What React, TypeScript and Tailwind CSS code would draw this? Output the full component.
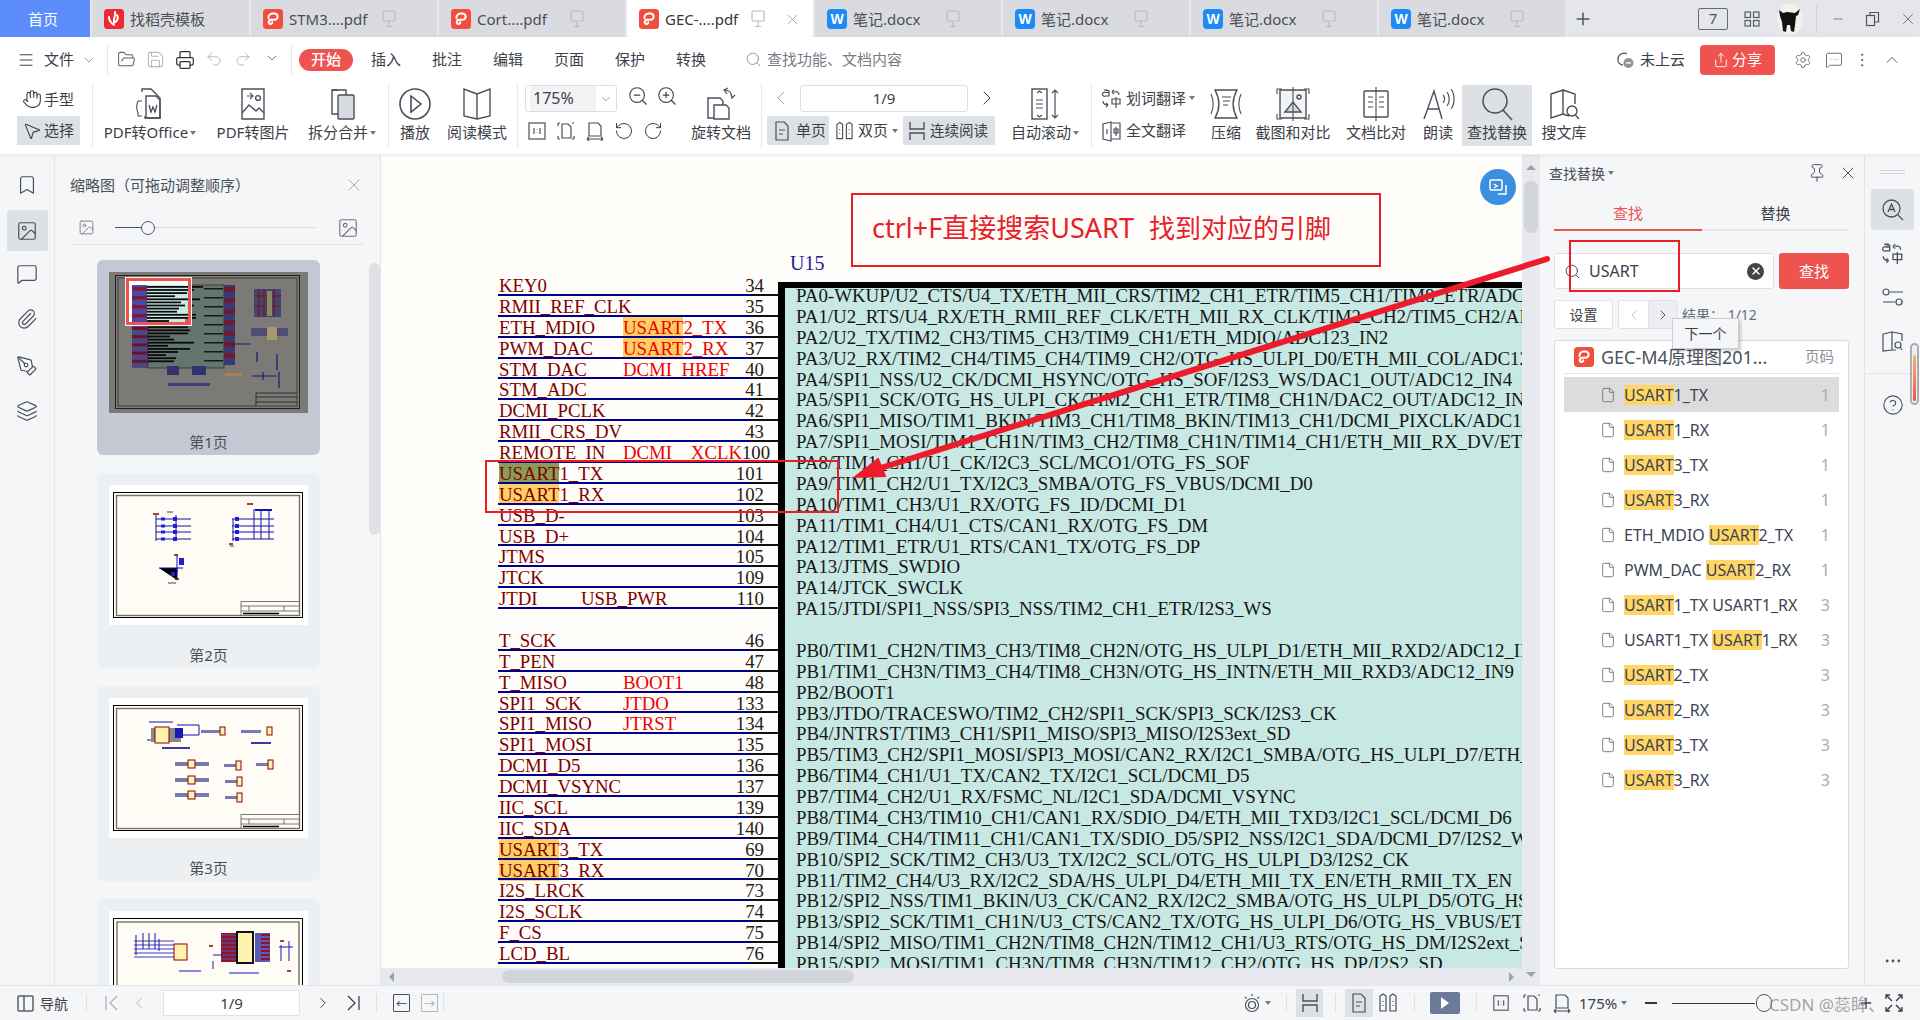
import { Fragment, type ReactNode } from 'react';
import {
  Bookmark, ChevronDown, ChevronLeft, ChevronRight, ChevronUp, CircleHelp, Ellipsis, File, FolderOpen,
  Hand, Image, Layers, Menu, MessageSquare, MessageSquareMore, Minus, MoreVertical, MousePointer2,
  Paperclip, PenTool, Pin, Plus, Printer, Redo2, RotateCcw, RotateCw, Save, Search, Settings, Share, Undo2, X,
  ZoomIn, ZoomOut,
} from 'lucide-react';

const paPins = [
  'PA0-WKUP/U2_CTS/U4_TX/ETH_MII_CRS/TIM2_CH1_ETR/TIM5_CH1/TIM8_ETR/ADC123_IN0',
  'PA1/U2_RTS/U4_RX/ETH_RMII_REF_CLK/ETH_MII_RX_CLK/TIM2_CH2/TIM5_CH2/ADC123_IN1',
  'PA2/U2_TX/TIM2_CH3/TIM5_CH3/TIM9_CH1/ETH_MDIO/ADC123_IN2',
  'PA3/U2_RX/TIM2_CH4/TIM5_CH4/TIM9_CH2/OTG_HS_ULPI_D0/ETH_MII_COL/ADC123_IN3',
  'PA4/SPI1_NSS/U2_CK/DCMI_HSYNC/OTG_HS_SOF/I2S3_WS/DAC1_OUT/ADC12_IN4',
  'PA5/SPI1_SCK/OTG_HS_ULPI_CK/TIM2_CH1_ETR/TIM8_CH1N/DAC2_OUT/ADC12_IN5',
  'PA6/SPI1_MISO/TIM1_BKIN/TIM3_CH1/TIM8_BKIN/TIM13_CH1/DCMI_PIXCLK/ADC12_IN6',
  'PA7/SPI1_MOSI/TIM1_CH1N/TIM3_CH2/TIM8_CH1N/TIM14_CH1/ETH_MII_RX_DV/ETH_RMII_CRS_DV',
  'PA8/TIM1_CH1/U1_CK/I2C3_SCL/MCO1/OTG_FS_SOF',
  'PA9/TIM1_CH2/U1_TX/I2C3_SMBA/OTG_FS_VBUS/DCMI_D0',
  'PA10/TIM1_CH3/U1_RX/OTG_FS_ID/DCMI_D1',
  'PA11/TIM1_CH4/U1_CTS/CAN1_RX/OTG_FS_DM',
  'PA12/TIM1_ETR/U1_RTS/CAN1_TX/OTG_FS_DP',
  'PA13/JTMS_SWDIO',
  'PA14/JTCK_SWCLK',
  'PA15/JTDI/SPI1_NSS/SPI3_NSS/TIM2_CH1_ETR/I2S3_WS',
  '',
  'PB0/TIM1_CH2N/TIM3_CH3/TIM8_CH2N/OTG_HS_ULPI_D1/ETH_MII_RXD2/ADC12_IN8',
  'PB1/TIM1_CH3N/TIM3_CH4/TIM8_CH3N/OTG_HS_INTN/ETH_MII_RXD3/ADC12_IN9',
  'PB2/BOOT1',
  'PB3/JTDO/TRACESWO/TIM2_CH2/SPI1_SCK/SPI3_SCK/I2S3_CK',
  'PB4/JNTRST/TIM3_CH1/SPI1_MISO/SPI3_MISO/I2S3ext_SD',
  'PB5/TIM3_CH2/SPI1_MOSI/SPI3_MOSI/CAN2_RX/I2C1_SMBA/OTG_HS_ULPI_D7/ETH_PPS_OUT',
  'PB6/TIM4_CH1/U1_TX/CAN2_TX/I2C1_SCL/DCMI_D5',
  'PB7/TIM4_CH2/U1_RX/FSMC_NL/I2C1_SDA/DCMI_VSYNC',
  'PB8/TIM4_CH3/TIM10_CH1/CAN1_RX/SDIO_D4/ETH_MII_TXD3/I2C1_SCL/DCMI_D6',
  'PB9/TIM4_CH4/TIM11_CH1/CAN1_TX/SDIO_D5/SPI2_NSS/I2C1_SDA/DCMI_D7/I2S2_WS',
  'PB10/SPI2_SCK/TIM2_CH3/U3_TX/I2C2_SCL/OTG_HS_ULPI_D3/I2S2_CK',
  'PB11/TIM2_CH4/U3_RX/I2C2_SDA/HS_ULPI_D4/ETH_MII_TX_EN/ETH_RMII_TX_EN',
  'PB12/SPI2_NSS/TIM1_BKIN/U3_CK/CAN2_RX/I2C2_SMBA/OTG_HS_ULPI_D5/OTG_HS_ID',
  'PB13/SPI2_SCK/TIM1_CH1N/U3_CTS/CAN2_TX/OTG_HS_ULPI_D6/OTG_HS_VBUS/ETH',
  'PB14/SPI2_MISO/TIM1_CH2N/TIM8_CH2N/TIM12_CH1/U3_RTS/OTG_HS_DM/I2S2ext_SD',
  'PB15/SPI2_MOSI/TIM1_CH3N/TIM8_CH3N/TIM12_CH2/OTG_HS_DP/I2S2_SD',
];

const netRows: [string, string, string][] = [
  ['KEY0', '', '34'], ['RMII_REF_CLK', '', '35'], ['ETH_MDIO', 'USART2_TX', '36'], ['PWM_DAC', 'USART2_RX', '37'],
  ['STM_DAC', 'DCMI_HREF', '40'], ['STM_ADC', '', '41'], ['DCMI_PCLK', '', '42'], ['RMII_CRS_DV', '', '43'],
  ['REMOTE_IN', 'DCMI__XCLK', '100'], ['USART1_TX', '', '101'], ['USART1_RX', '', '102'], ['USB_D-', '', '103'],
  ['USB_D+', '', '104'], ['JTMS', '', '105'], ['JTCK', '', '109'], ['JTDI', 'USB_PWR', '110'], ['', '', ''],
  ['T_SCK', '', '46'], ['T_PEN', '', '47'], ['T_MISO', 'BOOT1', '48'], ['SPI1_SCK', 'JTDO', '133'],
  ['SPI1_MISO', 'JTRST', '134'], ['SPI1_MOSI', '', '135'], ['DCMI_D5', '', '136'], ['DCMI_VSYNC', '', '137'],
  ['IIC_SCL', '', '139'], ['IIC_SDA', '', '140'], ['USART3_TX', '', '69'], ['USART3_RX', '', '70'],
  ['I2S_LRCK', '', '73'], ['I2S_SCLK', '', '74'], ['F_CS', '', '75'], ['LCD_BL', '', '76'],
];

const results: [string, string, string, string][] = [
  ['', 'USART', '1_TX', '1'], ['', 'USART', '1_RX', '1'], ['', 'USART', '3_TX', '1'], ['', 'USART', '3_RX', '1'],
  ['ETH_MDIO ', 'USART', '2_TX', '1'], ['PWM_DAC ', 'USART', '2_RX', '1'],
  ['', 'USART', '1_TX USART1_RX', '3'], ['USART1_TX ', 'USART', '1_RX', '3'],
  ['', 'USART', '2_TX', '3'], ['', 'USART', '2_RX', '3'], ['', 'USART', '3_TX', '3'], ['', 'USART', '3_RX', '3'],
];

const sw = { strokeWidth: 1.3 };

function PdfIcon({ size = 20 }: { size?: number }) {
  return (
    <svg width={size} height={size} viewBox="0 0 20 20" className="shrink-0">
      <rect width="20" height="20" rx="3.5" fill="#ef4f3f" />
      <path d="M5.500 9a4 4 0 0 1 4-4.500h2a3 3 0 0 1 0 6.300H8.200a2.400 2.400 0 0 0-2.400 2.400 1.700 1.700 0 0 0 3.400 0" fill="none" stroke="#fff" strokeWidth="2" strokeLinecap="round" />
    </svg>
  );
}

function WordIcon() {
  return (
    <span className="w-[20px] h-[20px] rounded-[4px] bg-[#1d8af5] text-white text-[14px] leading-[20px] text-center font-bold shrink-0 font-['Liberation_Sans',sans-serif]">W</span>
  );
}

function LeafIcon() {
  return (
    <svg width="20" height="20" viewBox="0 0 20 20" className="shrink-0">
      <rect width="20" height="20" rx="3.5" fill="#ea2a2f" />
      <path d="M11 3c1 4-2 6-1 11 3-2 5-5 3-8M5 8c0 4 2 6 5 8" fill="none" stroke="#fff" strokeWidth="2" strokeLinecap="round" />
    </svg>
  );
}

function MonitorIcon() {
  return (
    <svg width="16" height="20" viewBox="0 0 16 20" fill="none" stroke="#b9bdc5" strokeWidth="1.2" className="shrink-0">
      <rect x="2" y="2" width="12" height="10" rx="1" />
      <path d="M8 12v5M5 17.5h6" />
    </svg>
  );
}

function Tab({ icon, label, active, width = 'w-[186px]' }: { icon: ReactNode; label: string; active?: boolean; width?: string }) {
  return (
    <div className={`${width} h-full flex items-center pl-[12px] pt-px gap-[6px] text-[15px] ${active ? 'bg-white text-[#33373f]' : 'bg-[#d9dbe0] text-[#4a4e57]'}`}>
      {icon}
      <span className="whitespace-nowrap">{label}</span>
      {label !== '找稻壳模板' && (
        <span className="ml-auto mr-[40px] flex items-center">
          <MonitorIcon />
        </span>
      )}
      {active && <X size={17} strokeWidth={1} className="text-[#8d929c] -ml-[28px] mr-[12px]" />}
    </div>
  );
}

function VLine({ className = '' }: { className?: string }) {
  return <div className={`w-px self-stretch bg-[#e8e9ec] shrink-0 my-[3px] ${className}`} />;
}

function Big({ icon, label, width, caret, active }: { icon: ReactNode; label: string; width: string; caret?: boolean; active?: boolean }) {
  return (
    <div className={`${width} h-[61px] mt-[5px] flex flex-col items-center shrink-0 ${active ? 'bg-[#dde0e5]' : ''}`}>
      <div className="h-[37px] pt-px flex items-center justify-center">{icon}</div>
      <div className="leading-[21px] whitespace-nowrap flex items-center">
        {label}
        {caret && <span className="ml-[2px] w-0 h-0 border-x-[3px] border-x-transparent border-t-[4px] border-t-[#777]" />}
      </div>
    </div>
  );
}

const big = { width: 36, height: 36, viewBox: '0 0 36 36', fill: 'none', stroke: '#4a4f5a', strokeWidth: 1.4 };

function PdfOfficeIcon() {
  return (
    <svg {...big}>
      <path d="M10 6V3h9l9 9v20H13v-2" />
      <path d="M14 10h10l4 4v18H14z" />
      <path d="M17 19l2 7 2-5 2 5 2-7" strokeWidth="1.3" />
      <path d="M6 15c-2 5-2 8 0 12M10 30H6v-4M6 15h4" strokeWidth="1.1" />
    </svg>
  );
}
function PdfImageIcon() {
  return (
    <svg {...big}>
      <path d="M7 3h22v30H7z" />
      <circle cx="23" cy="12" r="2.4" />
      <path d="M7 27l7-8 7 6 3-3 5 5" />
      <path d="M12 10h6M15 7l3 3-3 3" strokeWidth="1.1" />
    </svg>
  );
}
function SplitIcon() {
  return (
    <svg {...big}>
      <path d="M14 4h-6v24h6" />
      <path d="M8 4h14v5" />
      <rect x="14" y="9" width="16" height="24" rx="1" fill="#d7dae0" />
    </svg>
  );
}
function PlayBig() {
  return (
    <svg {...big} strokeWidth={1.6}>
      <circle cx="18" cy="18" r="15" />
      <path d="M14 10l10 8-10 8z" />
    </svg>
  );
}
function BookBig() {
  return (
    <svg {...big}>
      <path d="M18 8L5 3v27l13 3 13-3V3z" />
      <path d="M18 8v25" />
    </svg>
  );
}
function RotateDoc() {
  return (
    <svg {...big}>
      <path d="M5 12h12l3 3v17H5z" fill="#fff" />
      <path d="M11 19h12l3 3v11H11z" fill="#fff" />
      <path d="M21 4c5 0 8 3 8 8M28 8l1 4 3-3M24 8l-3-4 4-2" strokeWidth="1.2" />
    </svg>
  );
}
function ScrollIcon() {
  return (
    <svg {...big}>
      <rect x="5" y="3" width="15" height="30" />
      <path d="M9 14h7M9 18h7M9 22h7M10 7l2.5-2 2.5 2M10 29l2.5 2 2.5-2" strokeWidth="1.2" />
      <path d="M28 4v28M25 7l3-3 3 3M25 29l3 3 3-3" strokeWidth="1.2" />
    </svg>
  );
}
function CompressIcon() {
  return (
    <svg {...big}>
      <path d="M7 4h22c-5 9-5 19 0 28H7c5-9 5-19 0-28z" />
      <path d="M14 11h9M15 15h7M15 19h5" strokeWidth="1.1" />
      <path d="M3 8c3 7 3 13 0 20M33 8c-3 7-3 13 0 20" strokeWidth="1.1" />
    </svg>
  );
}
function CaptureIcon() {
  return (
    <svg {...big}>
      <path d="M5 4h26v28H5z" fill="#f2f3f5" />
      <path d="M10 26l8-10 8 10z" fill="#d7dae0" />
      <circle cx="24" cy="11" r="2" />
      <path d="M18 1v34M2 8V3h5M29 3h5v5M2 28v5h5M29 33h5v-5" strokeWidth="1.1" />
    </svg>
  );
}
function CompareIcon() {
  return (
    <svg {...big}>
      <rect x="6" y="5" width="24" height="26" rx="1" />
      <path d="M18 1v34M10 11h5M10 16h5M10 21h5M21 11h5M21 16h5M21 21h5" strokeWidth="1.1" />
    </svg>
  );
}
function ReadIcon() {
  return (
    <svg {...big}>
      <path d="M4 33L14 5l8 28M8 23h11" />
      <path d="M23 9c2 2 2 5 0 8M27 6c3 4 3 10 0 14M31 3c4 5 4 15 0 20" strokeWidth="1.2" />
    </svg>
  );
}
function FindIcon() {
  return (
    <svg {...big} strokeWidth={1.5}>
      <circle cx="16" cy="15" r="12" />
      <path d="M24 24l9 10" />
    </svg>
  );
}
function LibraryIcon() {
  return (
    <svg {...big}>
      <path d="M5 8l12-4v24L5 32zM17 4l12 4v10M17 28l6 2" />
      <circle cx="26" cy="25" r="5" />
      <path d="M29.5 29l3.5 4" />
    </svg>
  );
}
function TranslateIcon({ size = 22 }: { size?: number }) {
  return (
    <svg width={size} height={size} viewBox="0 0 22 22" fill="none" stroke="#4a4f5a" strokeWidth="1.2">
      <path d="M8 3.5H4.5a2 2 0 0 0 0 0M3 3h3a2 2 0 0 1 2 2v4H4.5a2 2 0 1 1 0-3.5H8" />
      <path d="M13 5c3-1 5 0 5 3M11 5l2-2M11 5l2 2" />
      <path d="M11 12h8v5h-8zM15 10v11" />
      <path d="M2 14c0 3 2 4 5 4M7 18l-2-2M7 18l-2 2" />
    </svg>
  );
}
function ThumbGlyph({ size }: { size: number }) {
  return <Image size={size} strokeWidth={1.2} className="text-[#6d717a]" />;
}

function Small({ kind, size = 20 }: { kind: 'actual' | 'page' | 'width'; size?: number }) {
  return (
    <svg width={size} height={size} viewBox="0 0 20 20" fill="none" stroke="#4a4f5a" strokeWidth="1.2">
      {kind === 'actual' && (
        <Fragment>
          <rect x="2" y="2" width="16" height="16" />
          <path d="M7 7v6M13 7v6M10 8v.5M10 11.5v.5" />
        </Fragment>
      )}
      {kind === 'page' && (
        <Fragment>
          <path d="M6 3h6l3 3v11H6z" />
          <path d="M2 2h2M2 2v3M18 2h-2M2 18h2M2 18v-3M18 18h-2M18 18v-3" />
        </Fragment>
      )}
      {kind === 'width' && (
        <Fragment>
          <path d="M4 2h9l3 3v10H4z" />
          <path d="M2 18h16M2 18l2-2M2 18l2 2M18 18l-2-2M18 18l-2 2" />
        </Fragment>
      )}
    </svg>
  );
}

function SinglePage({ size = 20 }: { size?: number }) {
  return (
    <svg width={size} height={size} viewBox="0 0 20 20" fill="none" stroke="#4a4f5a" strokeWidth="1.2">
      <path d="M4 1h8l4 4v14H4z" />
      <path d="M7 9h6M7 13h4" />
    </svg>
  );
}
function DoublePage({ size = 20 }: { size?: number }) {
  return (
    <svg width={size} height={size} viewBox="0 0 20 20" fill="none" stroke="#4a4f5a" strokeWidth="1.2">
      <path d="M2 3l3-2 3 2v15H2zM12 3l3-2 3 2v15h-6z" />
      <path d="M5 8v1M5 12v1M15 8v1M15 12v1" />
    </svg>
  );
}
function Continuous({ size = 20 }: { size?: number }) {
  return (
    <svg width={size} height={size} viewBox="0 0 20 20" fill="none" stroke="#4a4f5a" strokeWidth="1.4">
      <path d="M3 1v7h14V1M3 19v-7h14v7M1 10h0" />
    </svg>
  );
}

/* grubby little schematic previews in the thumbnail strip */
const ends = [55, 50, 48, 40, 56, 38, 46, 44, 30, 48, 52, 34, 30, 44, 50, 40, 26, 34, 46, 24, 50, 30, 22, 36, 26];

function Frame({ dark }: { dark?: boolean }) {
  const c = dark ? '#1d1d1d' : '#000';
  return (
    <Fragment>
      <rect x="4.5" y="7.5" width="189" height="125" fill="none" stroke={c} strokeWidth="1" />
      <rect x="7.5" y="10.5" width="183" height="120" fill="none" stroke={dark ? '#444' : '#77736c'} strokeWidth="1.4" />
      <path d="M132 130v-13.5h58M132 121h58M132 126h58M140 126v-5M175 126v-5" fill="none" stroke={dark ? '#333' : '#555'} strokeWidth="0.8" />
      <path d="M134 128.500h36" stroke={c} strokeWidth="1.5" />
    </Fragment>
  );
}

function FirstThumb() {
  return (
    <svg viewBox="0 0 199 141" className="w-[199px] h-[141px] block">
      <rect width="199" height="141" fill="#7c7a77" />
      <rect x="6.500" y="3.500" width="184" height="133" fill="none" stroke="#222" />
      <rect x="9" y="6" width="179" height="128" fill="none" stroke="#4b4a47" strokeWidth="1.2" />
      <path d="M147 134v-13h41M147 125h41M147 130h41" stroke="#1d1d1d" fill="none" strokeWidth="0.8" />
      <rect x="23" y="13" width="16" height="83" fill="#4a4880" />
      {[0, 1, 2, 3, 4, 5, 6, 7, 8, 9].map((i) => <rect key={i} x="23" y={14 + i * 8.200} width="16" height="3" fill="#6e1030" />)}
      <rect x="39" y="13" width="76" height="83" fill="#62756f" stroke="#3b3b3b" />
      {ends.map((e, i) => <rect key={i} x="39" y={14 + i * 3.100} width={e - (i % 3) * 4} height="1.800" fill="#0a0a0a" />)}
      {[0, 1, 2, 3, 4, 5, 6, 7, 8].map((i) => <rect key={i} x="95" y={16 + i * 9} width="19" height="1.500" fill="#181818" />)}
      <rect x="115" y="13" width="11" height="80" fill="#3a3a72" />
      {[0, 1, 2, 3, 4, 5, 6].map((i) => <rect key={i} x="115" y={15 + i * 11} width="11" height="5" fill="#6e1a30" />)}
      <rect x="145" y="17" width="27" height="28" fill="#45456e" />
      <path d="M150 17v28M155 17v28M165 17v28M145 24h27M145 34h27" stroke="#6a2035" strokeWidth="1.600" />
      <rect x="158" y="19" width="5" height="25" fill="#8c8860" />
      <rect x="142" y="56" width="37" height="8" fill="#4d4d78" />
      <rect x="158" y="55" width="10" height="13" fill="#a89a68" />
      <path d="M122 72h20M148 80v10M168 82v16M143 104h25M154 100v8M170 100v16" stroke="#1a1a70" strokeWidth="1.200" />
      <rect x="58" y="94" width="12" height="9" fill="#32326e" />
      <rect x="83" y="94" width="14" height="9" fill="#32326e" />
      <rect x="59" y="111" width="42" height="3" fill="#40407f" />
      <rect x="116" y="101" width="17" height="3" fill="#a88050" />
      <rect x="16" y="5" width="67" height="49" fill="#f4f4f4" />
      <rect x="18.500" y="7.500" width="62" height="44" fill="#fff" stroke="#ef5350" strokeWidth="3" />
      <rect x="38" y="13" width="41" height="37" fill="#c7e8e3" />
      <rect x="23" y="13" width="15" height="37" fill="#4848a8" />
      {[0, 1, 2, 3].map((i) => <rect key={i} x="23" y={15 + i * 9} width="15" height="3.500" fill="#8a1530" />)}
      {ends.slice(0, 12).map((e, i) => <rect key={i} x="38" y={14 + i * 3.100} width={Math.min(41, e - (i % 4) * 4)} height="1.800" fill="#0a0a0a" />)}
      <rect x="76" y="47" width="6" height="6" fill="#ef5350" />
    </svg>
  );
}

function SecondThumb() {
  return (
    <svg viewBox="0 0 199 140" className="w-[199px] h-[140px] block">
      <rect width="199" height="140" fill="#fff" />
      <rect x="5" y="8" width="188" height="124" fill="#fffcf6" />
      <Frame />
      <g stroke="#1010b0" strokeWidth="1">
        {[34, 41, 47, 54].map((y) => <path key={y} d="M47 0h35" transform={`translate(0 ${y})`} />)}
        {[34, 41, 47, 54].map((y) => <path key={y} d="M123 0h42" transform={`translate(0 ${y})`} />)}
        <path d="M47 30v26M67 30v26M145 24v30M152 24v30M160 24v30M124 34v22" />
        <path d="M50 83h18v12M68 70v18M68 83h6" />
      </g>
      <g fill="#2020d0">
        {[34, 41, 47, 54].map((y) => <rect key={y} x="52" y={y - 1.500} width="4" height="3" />)}
        {[34, 41, 47, 54].map((y) => <rect key={y} x="64" y={y - 2} width="4" height="4" />)}
        {[34, 41, 47, 54].map((y) => <rect key={y} x="126" y={y - 2} width="4" height="4" />)}
        <rect x="70" y="73" width="5" height="7" />
        <rect x="62" y="87" width="4" height="4" />
      </g>
      <rect x="146" y="24" width="17" height="2" fill="#1010c0" />
      <path d="M44 29h6M120 59h4M138 19h6M65 70h4M66 94h4" stroke="#8b0000" strokeWidth="1.500" />
      <path d="M58 27h6M121 61h4M59 98h8" stroke="#345" strokeWidth="1.200" />
    </svg>
  );
}

function ThirdThumb() {
  const plugs = [[66, 66], [66, 82], [66, 97]];
  const jacks = [[115, 67], [116, 83], [116, 99], [147, 66]];
  return (
    <svg viewBox="0 0 199 140" className="w-[199px] h-[140px] block">
      <rect width="199" height="140" fill="#fff" />
      <rect x="5" y="8" width="188" height="124" fill="#fffcf6" />
      <Frame />
      <path d="M40 24h24M68 27h22v10H68M38 42h30" stroke="#1010b0" strokeWidth="1" fill="none" />
      <rect x="42" y="30" width="30" height="14" fill="#888" />
      <rect x="46" y="29" width="14" height="16" fill="#fff3b0" stroke="#8b0000" />
      <rect x="66" y="30" width="8" height="10" fill="#1a1ab0" />
      <rect x="92" y="32" width="22" height="3" fill="#7a7ab4" />
      <rect x="111" y="29" width="5" height="8" fill="#fff3b0" stroke="#8b0000" />
      <rect x="132" y="32" width="20" height="3" fill="#7a7ab4" />
      <rect x="158" y="29" width="5" height="8" fill="#fff3b0" stroke="#8b0000" />
      <rect x="53" y="49" width="28" height="2" fill="#3a3aa0" />
      <rect x="142" y="44" width="20" height="2" fill="#3a3aa0" />
      {plugs.map(([x, y]) => (
        <g key={y}>
          <rect x={x} y={y - 2} width="34" height="4" fill="#777ab0" />
          <rect x={x + 13} y={y - 4} width="7" height="8" fill="#fff3b0" stroke="#8b0000" />
        </g>
      ))}
      {jacks.map(([x, y]) => (
        <g key={x + y}>
          <rect x={x} y={y - 1} width="14" height="3" fill="#777ab0" />
          <rect x={x + 12} y={y - 4} width="5" height="9" fill="#fff3b0" stroke="#8b0000" />
        </g>
      ))}
    </svg>
  );
}

function FourthThumb() {
  return (
    <svg viewBox="0 0 199 74" className="w-[199px] h-[74px] block">
      <rect width="199" height="74" fill="#fff" />
      <rect x="4.500" y="7.500" width="189" height="70" fill="#fffcf6" stroke="#000" />
      <rect x="8" y="11" width="182" height="66" fill="none" stroke="#77736c" strokeWidth="1.400" />
      {[30, 34, 38, 42, 46].map((y) => <path key={y} d="M25 0h40" transform={`translate(0 ${y})`} stroke="#3a3ac0" />)}
      <path d="M27 24v20M34 22v16M40 22v16M46 22v16M50 28v12" stroke="#1515b0" />
      <rect x="65" y="33" width="13" height="16" fill="#fff3b0" stroke="#8b0000" />
      <rect x="112" y="22" width="16" height="29" fill="#8a1530" />
      {[24, 28, 32, 36, 40, 44, 48].map((y) => <path key={y} d="M112 0h16" transform={`translate(0 ${y})`} stroke="#5a5ab0" />)}
      <rect x="128" y="21" width="16" height="31" fill="#fff3b0" stroke="#111" strokeWidth="2" />
      <rect x="146" y="22" width="15" height="29" fill="#5a5ab0" />
      {[24, 28, 32, 36, 40, 44, 48].map((y) => <path key={y} d="M152 0h9" transform={`translate(0 ${y})`} stroke="#8a1530" strokeWidth="2" />)}
      <path d="M170 36h14M172 34v16M104 44h10M104 50v8M180 30v20" stroke="#1a1ab0" />
      <path d="M100 35h4M171 30h4M178 60h4" stroke="#8b0000" strokeWidth="1.500" />
      <path d="M70 60h22M120 62h30" stroke="#1a1ab0" />
    </svg>
  );
}

function ThumbCard({ label, selected, children }: { label: string; selected?: boolean; children: ReactNode }) {
  return (
    <div className={`w-[223px] h-[195px] mx-auto rounded-[6px] px-[12px] pt-[12px] shrink-0 ${selected ? 'bg-[#c4c8d2]' : 'bg-[#edf0f3]'}`}>
      {children}
      <div className={`text-center text-[15px] leading-[20px] text-[#4a4f5a] ${selected ? 'mt-[19px]' : 'mt-[20px]'}`}>{label}</div>
    </div>
  );
}

function Highlight({ name, highlight }: { name: string; highlight: 'sel' | 'on' }) {
  if (!name.startsWith('USART')) return <Fragment>{name}</Fragment>;
  return (
    <Fragment>
      <span className={highlight === 'sel' ? 'bg-[#8a9c5a]' : 'bg-[#ffcf66]'}>USART</span>
      {name.slice(5)}
    </Fragment>
  );
}

function Schematic() {
  return (
    <div className="relative flex-1 overflow-hidden bg-[#fffdf9] flex items-start pl-[117px] font-['Liberation_Serif',serif]">
      {/* net names */}
      <div className="w-[280px] shrink-0 mt-[120px]">
        {netRows.map(([name, alt, pin], i) => (
          <div key={i} className="h-[20.875px] flex flex-col">
            <div className="h-[18.875px] leading-[21px] text-[18.8px] flex whitespace-nowrap text-[#800000]">
              <span className="w-[125px] pl-px shrink-0">
                <Highlight name={name} highlight={name === 'USART1_TX' ? 'sel' : 'on'} />
              </span>
              <span className={alt === 'USB_PWR' ? '-ml-[42px] text-[#800000]' : 'text-[#f00000]'}>
                <Highlight name={alt} highlight="on" />
              </span>
              <span className="ml-auto mr-[14px] text-[#202020]">{pin}</span>
            </div>
            {name && (
              <div className="h-[2px] flex shrink-0">
                <div className="w-[252px] bg-[#00008b]" />
                <div className="flex-1 bg-[#101010]" />
              </div>
            )}
          </div>
        ))}
      </div>
      {/* chip body */}
      <div className="flex-1 min-w-0 mt-[93px]">
        <div className="h-[34px] pl-[12px] leading-[30px] text-[20px] text-[#20209a]">U15</div>
        <div className="border-t-[6px] border-l-[7px] border-black bg-[#c7e8e3] h-[900px] pl-[11px] text-[18.9px] text-[#161616] whitespace-nowrap">
          <div className="-mt-[2px]">
            {paPins.map((t, i) => <div key={i} className="h-[20.875px] leading-[20px]">{t}</div>)}
          </div>
        </div>
      </div>
      {/* blue badge sitting on the page */}
      <div className="absolute right-[6px] top-[14px] w-[36px] h-[36px] rounded-full bg-[#3b8fe0] flex items-center justify-center">
        <svg width="20" height="20" viewBox="0 0 20 20" fill="none" stroke="#fff" strokeWidth="1.5">
          <rect x="2" y="3" width="12" height="10" rx="1" />
          <path d="M10 17h8V8M6 7l3 2-3 2" />
        </svg>
      </div>
    </div>
  );
}

function DrawnNotes() {
  return (
    <Fragment>
      <div className="absolute left-[851px] top-[193px] w-[530px] h-[74px] border-2 border-[#ed1c24] flex items-center pl-[19px] pb-[3px] text-[#e8202a] font-['Noto_Sans','Noto_Sans_CJK_SC',sans-serif] whitespace-nowrap">
        <span className="text-[27px]">ctrl+F直接搜索USART</span>
        <span className="text-[26px] ml-[15px]">找到对应的引脚</span>
      </div>
      <div className="absolute left-[485px] top-[460px] w-[354px] h-[53px] border-2 border-[#ed1c24]" />
      <div className="absolute left-[1569px] top-[240px] w-[111px] h-[52px] border-2 border-[#ed1c24]" />
      <svg className="absolute left-0 top-0 pointer-events-none" width="1920" height="1020">
        <path d="M1547 259L868 472" stroke="#ed1c2c" strokeWidth="6" strokeLinecap="round" />
        <path d="M855 477L878 459L885 476Z" fill="#ed1c2c" stroke="#ed1c2c" strokeWidth="2" />
      </svg>
    </Fragment>
  );
}

export default function App() {
  return (
    <div className="relative w-[1920px] h-[1020px] overflow-hidden flex flex-col bg-white text-[15px] text-[#3c4048] font-['Noto_Sans','Noto_Sans_CJK_SC',sans-serif]">
      {/* title bar */}
      <div className="h-[37px] shrink-0 bg-[#e4e6eb] flex items-center">
        <div className="w-[90px] h-full bg-[#5c8dfb] text-white flex items-center justify-center pr-[4px] pt-px">首页</div>
        <div className="flex h-full gap-[2px] ml-[2px]">
          <Tab icon={<LeafIcon />} label="找稻壳模板" width="w-[157px]" />
          <Tab icon={<PdfIcon />} label="STM3....pdf" />
          <Tab icon={<PdfIcon />} label="Cort....pdf" />
          <Tab icon={<PdfIcon />} label="GEC-....pdf" active />
          <Tab icon={<WordIcon />} label="笔记.docx" />
          <Tab icon={<WordIcon />} label="笔记.docx" />
          <Tab icon={<WordIcon />} label="笔记.docx" />
          <Tab icon={<WordIcon />} label="笔记.docx" />
        </div>
        <Plus size={20} strokeWidth={1.8} className="ml-[8px] text-[#4a5366]" />
        <div className="ml-[105px] w-[30px] h-[22px] border border-[#666b75] rounded-[2px] flex items-center justify-center text-[15px] leading-none text-[#555]">7</div>
        <svg width="16" height="16" viewBox="0 0 16 16" fill="none" stroke="#565b65" strokeWidth="1.2" className="ml-[16px]">
          <rect x="1" y="1" width="5.500" height="5.500" /><rect x="9.500" y="1" width="5.500" height="5.500" />
          <rect x="1" y="9.500" width="5.500" height="5.500" /><rect x="9.500" y="9.500" width="5.500" height="5.500" />
        </svg>
        <svg width="28" height="32" viewBox="0 0 28 32" className="ml-[16px]">
          <ellipse cx="14" cy="16" rx="13" ry="15.500" fill="#eef4e8" />
          <path d="M3 7l4 3 4-1 8 1 5-4-2 6-2 1-1 9-1 7-3-1-1-6-3 0-1 7-3-1-1-9-2-6z" fill="#111" />
        </svg>
        <div className="w-px h-[28px] bg-[#cfd2d8] ml-[12px]" />
        <Minus size={14} strokeWidth={1.2} className="ml-[14px] text-[#555]" />
        <svg width="16" height="16" viewBox="0 0 16 16" fill="none" stroke="#555" strokeWidth="1.2" className="ml-[20px]">
          <rect x="1.500" y="4.500" width="8" height="10" /><path d="M5 4V1.500h8.500V11H10" />
        </svg>
        <X size={18} strokeWidth={1} className="ml-[18px] text-[#555]" />
      </div>

      {/* ribbon */}
      <div className="h-[118px] shrink-0 bg-white flex flex-col border-b border-[#ececec] shadow-[0_1px_3px_rgba(0,0,0,0.06)] z-10">
        <div className="h-[43px] flex items-center pl-[17px] pt-[2px] shrink-0">
          <Menu size={18} strokeWidth={1.3} />
          <span className="ml-[9px] w-[31px] whitespace-nowrap">文件</span>
          <ChevronDown size={16} strokeWidth={1.1} className="ml-[6px] text-[#777]" />
          <div className="w-px h-[30px] bg-[#e4e5e8] ml-[10px]" />
          <div className="flex ml-[4px] text-[#9ea2aa]">
            <span className="w-[29px] flex justify-center"><FolderOpen size={19} {...sw} className="text-[#5a5f69]" /></span>
            <span className="w-[29px] flex justify-center"><Save size={19} {...sw} className="text-[#b5b8be]" /></span>
            <span className="w-[29px] flex justify-center"><Printer size={20} strokeWidth={1.5} className="text-[#33373f]" /></span>
            <span className="w-[29px] flex justify-center"><Undo2 size={18} {...sw} className="text-[#b5b8be]" /></span>
            <span className="w-[29px] flex justify-center"><Redo2 size={18} {...sw} className="text-[#b5b8be]" /></span>
            <span className="w-[29px] flex justify-center"><ChevronDown size={16} {...sw} className="text-[#666]" /></span>
          </div>
          <div className="w-px h-[30px] bg-[#e4e5e8] ml-[5px]" />
          <div className="ml-[7px] w-[54px] h-[22px] rounded-full bg-[#ef5350] text-white font-medium flex items-center justify-center">开始</div>
          <div className="flex ml-[18px] gap-[30px] whitespace-nowrap">
            {['插入', '批注', '编辑', '页面', '保护', '转换'].map((t) => <span key={t} className="w-[31px]">{t}</span>)}
          </div>
          <Search size={17} strokeWidth={1.2} className="ml-[38px] text-[#7d8aa3]" />
          <span className="ml-[5px] text-[#777c85] whitespace-nowrap">查找功能、文档内容</span>
          <svg width="20" height="20" viewBox="0 0 20 20" fill="none" stroke="#555" strokeWidth="1.3" className="ml-[713px]">
            <path d="M12 4a6 6 0 0 0-9 5 5 5 0 0 0 5 6" />
            <circle cx="13.500" cy="13" r="5" fill="#8f949e" stroke="none" />
            <path d="M11 13h5" stroke="#fff" />
          </svg>
          <span className="ml-[5px] whitespace-nowrap">未上云</span>
          <div className="ml-[15px] w-[75px] h-[30px] rounded-[4px] bg-[#ef5350] text-white flex items-center justify-center gap-[3px] whitespace-nowrap">
            <Share size={16} strokeWidth={1.4} />分享
          </div>
          <Settings size={18} {...sw} className="ml-[19px] text-[#6a6f78]" />
          <MessageSquareMore size={18} {...sw} className="ml-[13px] text-[#6a6f78]" />
          <MoreVertical size={18} {...sw} className="ml-[10px] text-[#6a6f78]" />
          <ChevronUp size={20} strokeWidth={1.1} className="ml-[11px] text-[#555]" />
        </div>

        <div className="h-[75px] flex items-stretch pb-[3px] whitespace-nowrap">
          {/* hand / select */}
          <div className="w-[63px] ml-[17px] shrink-0 flex flex-col">
            <div className="h-[36px] pt-[2px] flex items-center pl-[5px] gap-[2px]"><Hand size={20} {...sw} />手型</div>
            <div className="h-[29px] bg-[#dde0e5] flex items-center pl-[5px] gap-[2px]"><MousePointer2 size={20} {...sw} />选择</div>
          </div>
          <VLine className="ml-[12px]" />
          <Big icon={<PdfOfficeIcon />} label="PDF转Office" caret width="w-[114px]" />
          <Big icon={<PdfImageIcon />} label="PDF转图片" width="w-[92px]" />
          <Big icon={<SplitIcon />} label="拆分合并" caret width="w-[86px]" />
          <VLine className="ml-[3px]" />
          <Big icon={<PlayBig />} label="播放" width="w-[52px]" />
          <Big icon={<BookBig />} label="阅读模式" width="w-[72px]" />
          <VLine className="ml-[4px]" />
          {/* zoom cluster */}
          <div className="w-[173px] shrink-0 flex flex-col pl-[7px]">
            <div className="h-[36px] pt-[5px] flex items-start">
              <div className="w-[92px] h-[27px] border border-[#dcdee3] rounded-[3px] flex items-center bg-white pl-[4px]">
                <div className="w-[66px] h-[25px] bg-[#f2f3f5] pl-[3px] leading-[25px] text-[16px]">175%</div>
                <ChevronDown size={14} strokeWidth={1.2} className="ml-[3px] text-[#777]" />
              </div>
              <ZoomOut size={22} strokeWidth={1.2} className="ml-[10px]" />
              <ZoomIn size={22} strokeWidth={1.2} className="ml-[7px]" />
            </div>
            <div className="h-[29px] flex items-center gap-[9px] pl-[2px]">
              <Small kind="actual" />
              <Small kind="page" />
              <Small kind="width" />
              <RotateCcw size={20} strokeWidth={1.2} />
              <RotateCw size={20} strokeWidth={1.2} />
            </div>
          </div>
          <Big icon={<RotateDoc />} label="旋转文档" width="w-[60px]" />
          <VLine className="ml-[10px]" />
          {/* page cluster */}
          <div className="w-[237px] shrink-0 flex flex-col pl-[5px]">
            <div className="h-[36px] pt-[5px] flex items-start">
              <ChevronLeft size={24} strokeWidth={1} className="ml-[2px] mt-[1px] text-[#9a9ea6]" />
              <div className="ml-[7px] w-[168px] h-[27px] border border-[#dcdee3] rounded-[3px] text-center leading-[25px]">1/9</div>
              <ChevronRight size={24} strokeWidth={1} className="ml-[7px] mt-[1px] text-[#444]" />
            </div>
            <div className="h-[29px] flex items-stretch">
              <div className="w-[62px] bg-[#dde0e5] rounded-[2px] flex items-center pl-[5px] gap-[4px]"><SinglePage />单页</div>
              <div className="w-[63px] ml-[6px] flex items-center gap-[4px]"><DoublePage />双页<span className="w-0 h-0 border-x-[3px] border-x-transparent border-t-[4px] border-t-[#777]" /></div>
              <div className="w-[92px] ml-[5px] bg-[#dde0e5] rounded-[2px] flex items-center pl-[4px] gap-[3px] text-[14.500px]"><Continuous />连续阅读</div>
            </div>
          </div>
          <Big icon={<ScrollIcon />} label="自动滚动" caret width="w-[92px]" />
          <VLine />
          {/* translate cluster */}
          <div className="w-[108px] shrink-0 flex flex-col pl-[9px]">
            <div className="h-[36px] flex items-center gap-[3px]"><TranslateIcon />划词翻译<span className="w-0 h-0 border-x-[3px] border-x-transparent border-t-[4px] border-t-[#777]" /></div>
            <div className="h-[29px] flex items-center gap-[3px]">
              <svg width="22" height="22" viewBox="0 0 22 22" fill="none" stroke="#4a4f5a" strokeWidth="1.2">
                <path d="M10 2L2 4v15l8 2zM10 3h9v16h-9" /><path d="M6 9v5M13 9h4v4h-4zM15 7v9" />
              </svg>全文翻译
            </div>
          </div>
          <Big icon={<CompressIcon />} label="压缩" width="w-[52px]" />
          <Big icon={<CaptureIcon />} label="截图和对比" width="w-[82px]" />
          <Big icon={<CompareIcon />} label="文档比对" width="w-[84px]" />
          <Big icon={<ReadIcon />} label="朗读" width="w-[40px]" />
          <Big icon={<FindIcon />} label="查找替换" width="w-[70px] ml-[4px]" active />
          <Big icon={<LibraryIcon />} label="搜文库" width="w-[64px]" />
        </div>
      </div>

      {/* main */}
      <div className="flex-1 min-h-0 flex">
        {/* left rail */}
        <div className="w-[55px] shrink-0 bg-[#f5f6f8] border-r border-[#e3e5ea] flex flex-col items-center pt-[19px] text-[#4a4f5a]">
          <Bookmark size={22} {...sw} />
          <div className="mt-[14px] w-[41px] h-[41px] bg-[#dde0e5] rounded-[2px] flex items-center justify-center"><Image size={22} {...sw} /></div>
          <MessageSquare size={22} {...sw} className="mt-[12px]" />
          <Paperclip size={22} {...sw} className="mt-[23px]" />
          <PenTool size={22} {...sw} className="mt-[25px]" />
          <Layers size={22} {...sw} className="mt-[23px]" />
        </div>

        {/* thumbnails */}
        <div className="relative w-[326px] shrink-0 bg-[#f5f6f8] flex flex-col overflow-hidden border-r border-[#e3e5ea]">
          <div className="h-[60px] shrink-0 pl-[15px] pr-[20px] pt-[18px] flex items-start justify-between text-[15px] leading-[24px] text-[#4a4f5a]">
            <span>缩略图（可拖动调整顺序）</span>
            <X size={20} strokeWidth={1} className="text-[#9a9ea6] mt-[2px] -mr-[4px]" />
          </div>
          <div className="mx-[15px] h-[30px] shrink-0 flex items-center border-b border-[#e3e5ea] pb-[4px] pl-[8px] pr-[6px]">
            <ThumbGlyph size={17} />
            <div className="ml-[20px] w-[200px] h-px bg-[#d3d7df] flex items-center">
              <div className="w-[26px] h-px bg-[#4a5366]" />
              <div className="w-[14px] h-[14px] rounded-full border border-[#4a5366] bg-[#f5f6f8]" />
            </div>
            <div className="ml-auto"><ThumbGlyph size={22} /></div>
          </div>
          <div className="flex-1 min-h-0 flex flex-col pt-[15px] gap-[18px] pr-[20px] pl-[2px]">
            <ThumbCard label="第1页" selected><FirstThumb /></ThumbCard>
            <ThumbCard label="第2页"><SecondThumb /></ThumbCard>
            <ThumbCard label="第3页"><ThirdThumb /></ThumbCard>
            <ThumbCard label="第4页"><FourthThumb /></ThumbCard>
          </div>
          <div className="absolute right-0 top-[108px] w-[11px] h-[272px] rounded-full bg-[#dfe1e6]" />
        </div>

        {/* document */}
        <div className="w-[1141px] shrink-0 flex flex-col">
          <Schematic />
          <div className="h-[17px] shrink-0 bg-[#e8e9ef] flex items-center pl-[8px]">
            <div className="w-0 h-0 border-y-[5px] border-y-transparent border-r-[5px] border-r-[#9aa3b4]" />
            <div className="ml-[108px] w-[352px] h-[13px] rounded-full bg-[#d2d4dc]" />
            <div className="ml-[655px] w-0 h-0 border-y-[5px] border-y-transparent border-l-[5px] border-l-[#9aa3b4]" />
          </div>
        </div>
        <div className="w-[18px] shrink-0 bg-[#e8e9ef] flex flex-col items-center pt-[10px]">
          <div className="w-0 h-0 border-x-[5px] border-x-transparent border-b-[5px] border-b-[#9aa3b4]" />
          <div className="mt-[11px] w-[14px] h-[52px] rounded-full bg-[#d2d4dc]" />
          <div className="mt-auto mb-[8px] w-0 h-0 border-x-[5px] border-x-transparent border-t-[5px] border-t-[#9aa3b4]" />
        </div>

        {/* find panel */}
        <div className="w-[325px] shrink-0 bg-[#f5f6f8] border-r border-[#e3e5ea] flex flex-col pl-[14px] pr-[15px]">
          <div className="h-[38px] shrink-0 flex items-center text-[14px] text-[#4a4f5a] -ml-[5px] pb-[2px]">
            查找替换
            <span className="ml-[3px] w-0 h-0 border-x-[3px] border-x-transparent border-t-[4px] border-t-[#777]" />
            <Pin size={20} strokeWidth={1.2} className="ml-auto mr-[11px]" />
            <X size={20} strokeWidth={1.2} className="mr-[-9px]" />
          </div>
          <div className="h-[38px] shrink-0 flex border-b-2 border-[#e3e5ea]">
            <div className="w-[148px] text-center text-[#ef5350] leading-[40px] border-b-2 border-[#ef5350] h-[38px]">查找</div>
            <div className="flex-1 text-center leading-[40px]">替换</div>
          </div>
          <div className="mt-[22px] h-[36px] shrink-0 flex gap-[5px]">
            <div className="w-[221px] bg-white border border-[#dfe1e6] rounded-[3px] flex items-center pl-[9px]">
              <Search size={17} strokeWidth={1.3} />
              <span className="ml-[8px] text-[16px]">USART</span>
              <span className="ml-auto mr-[9px] w-[17px] h-[17px] rounded-full bg-[#444] flex items-center justify-center">
                <X size={12} strokeWidth={3} className="text-white" />
              </span>
            </div>
            <div className="w-[70px] bg-[#ef5350] rounded-[3px] text-white flex items-center justify-center">查找</div>
          </div>
          <div className="mt-[11px] h-[29px] shrink-0 flex items-center">
            <div className="w-[59px] h-full bg-white border border-[#dfe1e6] rounded-[3px] text-center leading-[27px] text-[14px]">设置</div>
            <div className="ml-[5px] w-[60px] h-full bg-white border border-[#dfe1e6] rounded-[3px] flex overflow-hidden">
              <div className="w-[29px] flex items-center justify-center"><ChevronLeft size={16} strokeWidth={1.2} className="text-[#b5b8be]" /></div>
              <div className="flex-1 bg-[#eceef1] border-l border-[#dfe1e6] flex items-center justify-center"><ChevronRight size={16} strokeWidth={1.3} /></div>
            </div>
            <span className="ml-[4px] text-[14px] text-[#6a6f78] whitespace-nowrap">结果： 1/12</span>
          </div>
          <div className="mt-[11px] flex-1 min-h-0 mb-[16px] bg-white border border-[#d9dbe2] rounded-[3px] px-[9px]">
            <div className="h-[33px] flex items-center border-b border-[#e3e5ea] mb-[3px] pl-[10px]">
              <PdfIcon />
              <span className="ml-[7px] text-[18px] text-[#4a5160] whitespace-nowrap">GEC-M4原理图201...</span>
              <span className="ml-auto mr-[5px] text-[#8b8f97] text-[14.500px] whitespace-nowrap">页码</span>
            </div>
            {results.map(([before, hit, after, page], i) => (
              <div key={i} className={`h-[35px] flex items-center pl-[37px] text-[16px] text-[#3c4453] whitespace-pre ${i === 0 ? 'bg-[#dcdcdc]' : ''}`}>
                <File size={16} strokeWidth={1.3} className="text-[#6a6f78] -ml-[1px]" />
                <span className="ml-[8px]">
                  {before}
                  <span className="bg-[#ffd566] inline-block leading-[20px]">{hit}</span>
                  {after}
                </span>
                <span className="ml-auto mr-[9px] text-[#b3aaa2]">{page}</span>
              </div>
            ))}
          </div>
        </div>

        {/* right rail */}
        <div className="w-[55px] shrink-0 bg-[#f5f6f8] flex flex-col items-center text-[#4a4f5a] relative">
          <div className="mt-[15px] w-[25px] h-[4px] border-y border-[#cfd2d8]" />
          <div className="mt-[15px] w-[43px] h-[41px] bg-[#dde0e5] rounded-[2px] flex items-center justify-center">
            <svg width="24" height="24" viewBox="0 0 24 24" fill="none" stroke="#4a4f5a" strokeWidth="1.3">
              <circle cx="10.500" cy="10.500" r="8.500" />
              <path d="M17 17l5 5M7 14l3.500-8 3.500 8M8.300 11.500h4.400" />
            </svg>
          </div>
          <div className="mt-[11px]"><TranslateIcon size={24} /></div>
          <svg width="22" height="22" viewBox="0 0 22 22" fill="none" stroke="#4a4f5a" strokeWidth="1.2" className="mt-[21px]">
            <path d="M8 6h13M1 16h12" /><circle cx="4" cy="6" r="3" /><circle cx="17" cy="16" r="3" /><path d="M20 16h1" />
          </svg>
          <svg width="22" height="22" viewBox="0 0 22 22" fill="none" stroke="#4a4f5a" strokeWidth="1.2" className="mt-[22px]">
            <path d="M1 4l9-2v18l-9 1zM10 2l10 2v7M10 20l4 0" /><circle cx="16" cy="15" r="3" /><path d="M18 17l2 3" />
          </svg>
          <div className="mt-[21px] w-full h-px bg-[#e3e5ea]" />
          <CircleHelp size={22} strokeWidth={1.2} className="mt-[20px]" />
          <Ellipsis size={20} strokeWidth={1.4} className="mt-auto mb-[14px]" />
          <div className="absolute right-[1px] top-[188px] w-[9px] h-[62px] rounded-full border-2 border-[#a9adb5] bg-[#eee] p-px">
            <div className="mt-[9px] h-[46px] rounded-full bg-gradient-to-b from-[#f8b26a] to-[#f05050]" />
          </div>
        </div>
      </div>

      {/* status bar */}
      <div className="h-[35px] shrink-0 bg-[#f5f6f8] border-t border-[#e3e5ea] flex items-center pl-[17px] text-[14px] whitespace-nowrap relative">
        <svg width="17" height="17" viewBox="0 0 17 17" fill="none" stroke="#5a5f69" strokeWidth="1.5"><rect x="1" y="1" width="15" height="15" rx="1" /><path d="M7 1v15" /></svg>
        <span className="ml-[6px] w-[30px]">导航</span>
        <div className="ml-[16px] w-px h-[18px] bg-[#dfe1e6]" />
        <svg width="16" height="16" viewBox="0 0 16 16" fill="none" stroke="#a8acb4" strokeWidth="1.2" className="ml-[17px]"><path d="M2 1v14M13 1L6 8l7 7" /></svg>
        <ChevronLeft size={18} strokeWidth={1.2} className="ml-[10px] text-[#a8acb4]" />
        <div className="ml-[15px] w-[137px] h-[26px] bg-white border border-[#dfe1e6] rounded-[2px] text-center text-[15px] leading-[24px]">1/9</div>
        <ChevronRight size={18} strokeWidth={1.3} className="ml-[14px]" />
        <svg width="16" height="16" viewBox="0 0 16 16" fill="none" stroke="#33373f" strokeWidth="1.2" className="ml-[13px]"><path d="M3 1l7 7-7 7M14 1v14" /></svg>
        <div className="ml-[15px] w-px h-[18px] bg-[#dfe1e6]" />
        <div className="ml-[16px] w-[17px] h-[18px] border border-[#4a4f5a] rounded-[1px] flex items-center justify-center text-[11px] leading-none">←</div>
        <div className="ml-[11px] w-[17px] h-[18px] border border-[#b5b8be] rounded-[1px] flex items-center justify-center text-[11px] leading-none text-[#a8acb4]">→</div>
        <div className="ml-[5px] w-px h-[18px] bg-[#dfe1e6]" />

        <svg width="20" height="20" viewBox="0 0 20 20" fill="none" stroke="#4a4f5a" strokeWidth="1.2" className="ml-[798px]">
          <circle cx="10" cy="12" r="6.500" /><circle cx="10" cy="12" r="3.500" /><path d="M10 1v2M3 4l1.500 1.500M17 4l-1.500 1.500" />
        </svg>
        <span className="ml-[3px] w-0 h-0 border-x-[3px] border-x-transparent border-t-[4px] border-t-[#777]" />
        <div className="ml-[15px] w-px h-[18px] bg-[#dfe1e6]" />
        <div className="ml-[9px] w-[27px] h-[28px] bg-[#dde0e5] flex items-center justify-center"><Continuous /></div>
        <div className="ml-[12px] w-px h-[18px] bg-[#dfe1e6]" />
        <div className="ml-[9px] w-[28px] h-[28px] bg-[#dde0e5] flex items-center justify-center"><SinglePage /></div>
        <div className="ml-[5px]"><DoublePage /></div>
        <div className="ml-[16px] w-px h-[18px] bg-[#dfe1e6]" />
        <div className="ml-[15px] w-[30px] h-[22px] bg-[#6b7a99] rounded-[2px] flex items-center justify-center">
          <span className="w-0 h-0 border-y-[6px] border-y-transparent border-l-[8px] border-l-white" />
        </div>
        <div className="ml-[16px] w-px h-[18px] bg-[#dfe1e6]" />
        <div className="ml-[15px]"><Small kind="actual" size={18} /></div>
        <div className="ml-[12px]"><Small kind="page" size={20} /></div>
        <div className="ml-[10px]"><Small kind="width" size={20} /></div>
        <span className="ml-[7px] w-[39px] text-[15px]">175%</span>
        <span className="ml-[3px] w-0 h-0 border-x-[3px] border-x-transparent border-t-[4px] border-t-[#777]" />
        <div className="ml-[18px] w-[12px] h-[2px] bg-[#33373f]" />
        <div className="ml-[15px] w-[83px] h-px bg-[#33373f]" />
        <div className="ml-px w-[16px] h-[18px] rounded-full border border-[#555] bg-[#f5f6f8]" />
        <Plus size={16} strokeWidth={2} className="ml-[86px]" />
        <svg width="18" height="18" viewBox="0 0 18 18" fill="none" stroke="#33373f" strokeWidth="1.3" className="ml-[11px]">
          <path d="M1 5V1h4M13 1h4v4M1 13v4h4M13 17h4v-4M2 2l5 5M16 2l-5 5M2 16l5-5M16 16l-5-5" />
        </svg>
        <span className="absolute left-[1769px] top-[6px] text-[17px] text-[#8e8e8e]/80">CSDN @蕊眸、</span>
      </div>

      {/* tooltip next to the search result stepper */}
      <div className="absolute left-[1672px] top-[318px] w-[67px] h-[31px] bg-[#f5f6f8] border border-[#c9ccd2] shadow-[2px_2px_3px_rgba(0,0,0,0.2)] flex items-center justify-center text-[14px]">下一个</div>
      <DrawnNotes />
    </div>
  );
}
